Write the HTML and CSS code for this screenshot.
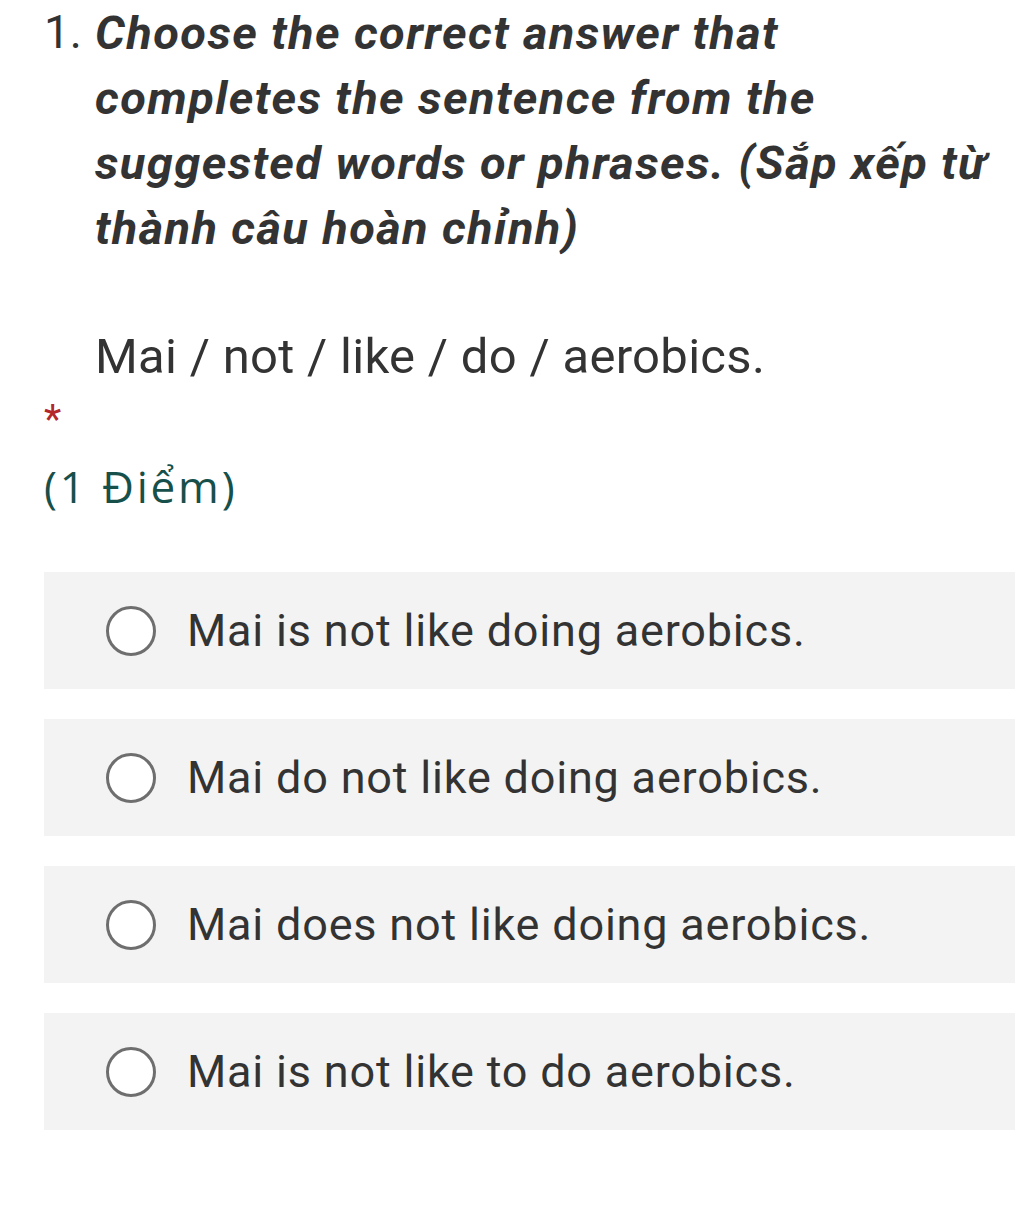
FILE: index.html
```html
<!DOCTYPE html>
<html>
<head>
<meta charset="utf-8">
<link rel="stylesheet" href="styles.css">
</head>
<body>
<div class="question">
  <div class="title-row">
    <span class="num">1.</span>
    <div class="title-body">
      <div class="title">Choose the correct answer that completes the sentence from the suggested words or phrases. (Sắp xếp từ thành câu hoàn chỉnh)</div>
      <div class="prompt">Mai / not / like / do / aerobics.</div>
    </div>
  </div>
  <div class="required">*</div>
  <div class="points">(1 Điểm)</div>
  <div class="options">
    <div class="option"><span class="radio"></span><span class="label">Mai is not like doing aerobics.</span></div>
    <div class="option"><span class="radio"></span><span class="label">Mai do not like doing aerobics.</span></div>
    <div class="option"><span class="radio"></span><span class="label">Mai does not like doing aerobics.</span></div>
    <div class="option"><span class="radio"></span><span class="label">Mai is not like to do aerobics.</span></div>
  </div>
</div>
</body>
</html>
```
FILE: styles.css
```css
html, body {
  margin: 0;
  padding: 0;
  background: #ffffff;
}
body {
  font-family: Roboto, "Noto Sans", sans-serif;
  color: #333333;
}
.question {
  padding: 0 9px 0 44px;
}
.title-row {
  display: flex;
  align-items: flex-start;
}
.num {
  font-size: 46px;
  line-height: 65px;
  width: 51px;
  flex-shrink: 0;
  color: #333;
}
.title-body {
  flex: 1;
}
.title {
  max-width: 910px;
  font-size: 47px;
  line-height: 65px;
  letter-spacing: 1.4px;
  font-weight: 700;
  font-style: italic;
  color: #333;
}
.prompt {
  font-size: 49px;
  line-height: 65px;
  letter-spacing: 0.3px;
  margin-top: 64px;
  color: #333;
}
.required {
  color: #b3262a;
  font-size: 40px;
  line-height: 40px;
  margin-top: 11px;
  height: 40px;
}
.points {
  font-family: "Open Sans", "Noto Sans", sans-serif;
  color: #17504a;
  font-size: 44px;
  line-height: 60px;
  letter-spacing: 2.8px;
  margin-top: 16px;
}
.options {
  margin-top: 56px;
  display: flex;
  flex-direction: column;
  gap: 30px;
}
.option {
  background: #f3f3f3;
  height: 117px;
  display: flex;
  align-items: center;
  padding-left: 62px;
}
.radio {
  box-sizing: border-box;
  width: 50px;
  height: 50px;
  border: 3px solid #6e6e6e;
  border-radius: 50%;
  background: #fff;
  flex-shrink: 0;
}
.label {
  font-size: 45px;
  letter-spacing: 0.8px;
  margin-left: 31px;
  color: #333;
}
```
